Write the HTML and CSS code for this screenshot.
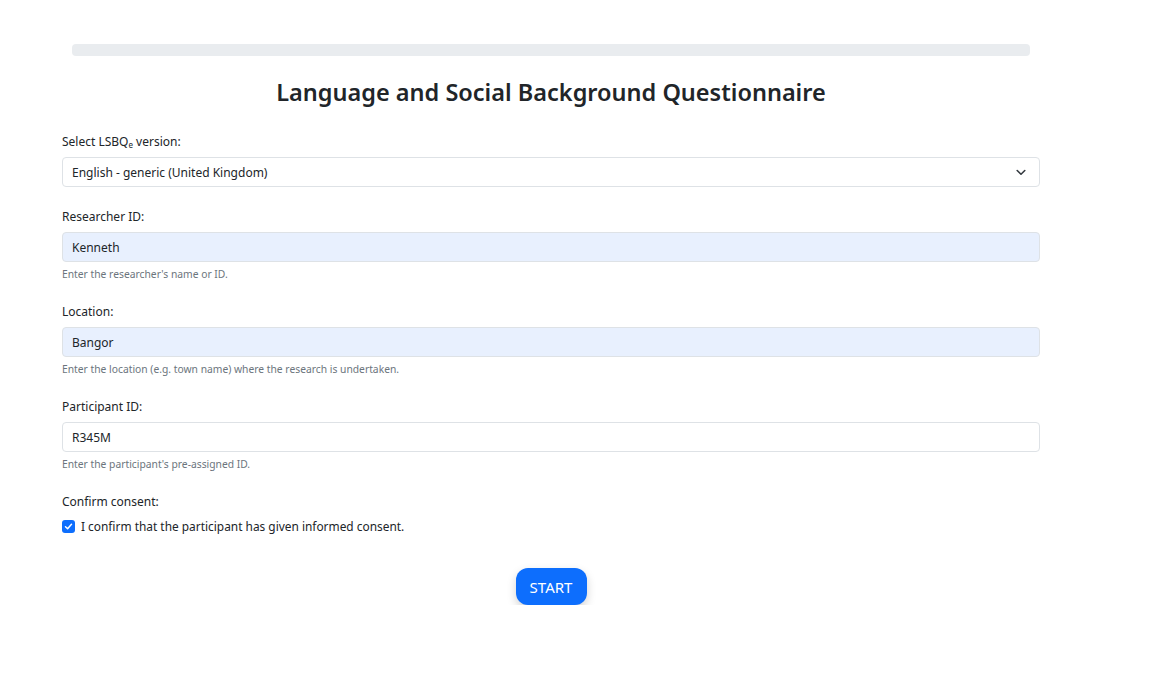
FILE: index.html
```html
<!DOCTYPE html>
<html lang="en">
<head>
<meta charset="utf-8">
<title>LSBQe</title>
<link rel="stylesheet" href="styles.css">
</head>
<body>
<div class="page">
  <div class="container">
    <div class="progress"></div>
    <h1 class="title">Language and Social Background Questionnaire</h1>
    <form class="form">
      <div class="group">
        <label class="label">Select LSBQ<sub class="sub">e</sub> version:</label>
        <div class="select">
          <span class="value">English - generic (United Kingdom)</span>
          <svg class="chevron" width="10" height="7" viewBox="0 0 10 7"><path d="M1.2 1.5 L5 5.2 L8.8 1.5" fill="none" stroke="#343a40" stroke-width="1.6" stroke-linecap="round" stroke-linejoin="round"/></svg>
        </div>
      </div>
      <div class="group">
        <label class="label">Researcher ID:</label>
        <div class="input autofill">Kenneth</div>
        <div class="help">Enter the researcher's name or ID.</div>
      </div>
      <div class="group">
        <label class="label">Location:</label>
        <div class="input autofill">Bangor</div>
        <div class="help">Enter the location (e.g. town name) where the research is undertaken.</div>
      </div>
      <div class="group">
        <label class="label">Participant ID:</label>
        <div class="input">R345M</div>
        <div class="help">Enter the participant's pre-assigned ID.</div>
      </div>
      <div class="group last">
        <label class="label">Confirm consent:</label>
        <div class="check-row">
          <span class="checkbox"><svg width="9" height="9" viewBox="0 0 9 9"><path d="M1.5 4.7 L3.6 6.7 L7.5 2.3" fill="none" stroke="#fff" stroke-width="1.5" stroke-linecap="round" stroke-linejoin="round"/></svg></span>
          <span class="check-label">I confirm that the participant has given informed consent.</span>
        </div>
      </div>
      <div class="actions">
        <button type="button" class="btn">START</button>
      </div>
    </form>
  </div>
</div>
</body>
</html>
```
FILE: styles.css
```css
html, body {
  margin: 0;
  padding: 0;
  background: #fff;
}
body {
  font-family: "Noto Sans", "Open Sans", sans-serif;
  color: #212529;
}
.page {
  padding: 44px 0 0 62px;
}
.container {
  width: 978px;
}
.progress {
  margin: 0 10px;
  height: 12px;
  background: #e9ecef;
  border-radius: 4px;
}
.title {
  margin: 20px 0 24px;
  text-align: center;
  font-size: 23.5px;
  line-height: 32px;
  font-weight: 600;
  color: #212529;
}
.group {
  margin-bottom: 20px;
}
.label {
  display: block;
  font-size: 12px;
  line-height: 19px;
  margin-bottom: 6px;
}
.sub {
  font-size: 8px;
  vertical-align: -2px;
  line-height: 0;
}
.select, .input {
  box-sizing: border-box;
  height: 30px;
  border: 1px solid #dee2e6;
  border-radius: 4px;
  padding: 0 9px;
  display: flex;
  align-items: center;
  font-size: 12px;
  color: #212529;
  background: #fff;
}
.select {
  justify-content: space-between;
  padding-right: 13px;
}
.autofill {
  background: #e8f0fe;
}
.help {
  margin-top: 4px;
  font-size: 10.3px;
  line-height: 16px;
  color: #6c757d;
}
.last {
  margin-bottom: 0;
}
.check-row {
  display: flex;
  align-items: center;
  gap: 6px;
  height: 18px;
}
.checkbox {
  width: 13px;
  height: 13px;
  border-radius: 3px;
  background: #0d6efd;
  display: flex;
  align-items: center;
  justify-content: center;
}
.check-label {
  font-size: 11.9px;
}
.actions {
  display: flex;
  justify-content: center;
  margin-top: 33px;
}
.btn {
  font-family: inherit;
  font-size: 15px;
  color: #fff;
  background: #0d6efd;
  border: none;
  border-radius: 12px;
  width: 71px;
  height: 37px;
  padding: 0;
  box-shadow: 0 4px 10px rgba(0, 0, 0, 0.18);
}
```
